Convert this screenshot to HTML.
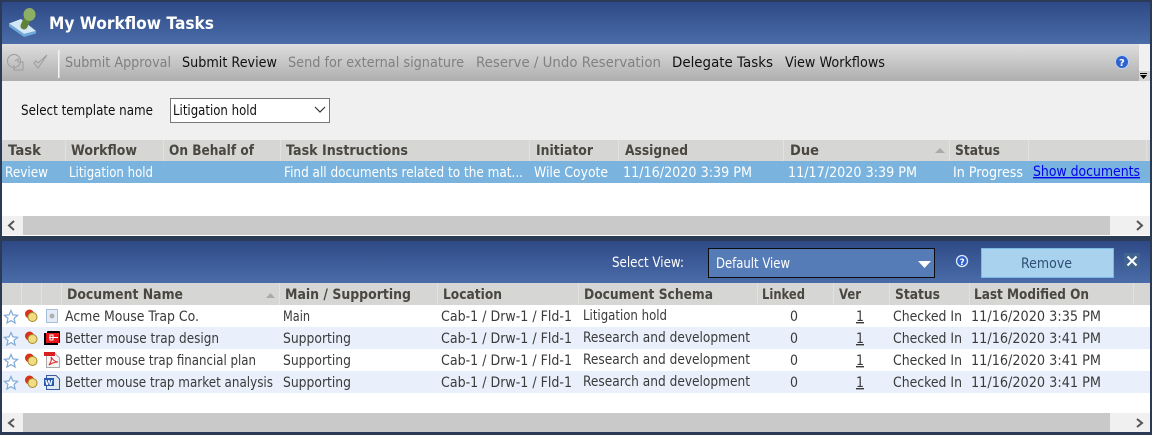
<!DOCTYPE html>
<html><head><meta charset="utf-8">
<style>
html,body{margin:0;padding:0;background:#fff;width:1152px;height:435px;overflow:hidden}
svg{display:block}
text{font-family:"DejaVu Sans","Liberation Sans",sans-serif;font-size:14px;fill:#3a3a3a}
.h{font-weight:bold;fill:#4a4640;font-size:14px}
.w{fill:#fff}
.d{fill:#808080}
.b{fill:#111}
</style></head><body>
<svg width="1152" height="435" viewBox="0 0 1152 435" xmlns="http://www.w3.org/2000/svg">
<defs>
<linearGradient id="hd" x1="0" y1="0" x2="0" y2="1"><stop offset="0" stop-color="#2e4a86"/><stop offset="1" stop-color="#4a6ca9"/></linearGradient>
<linearGradient id="tb" x1="0" y1="0" x2="0" y2="1"><stop offset="0" stop-color="#dedede"/><stop offset="1" stop-color="#aeaeae"/></linearGradient>
<g id="star"><path d="M0 -6.500L1.900 -2.100L6.600 -1.700L3 1.400L4.100 6L0 3.600L-4.100 6L-3 1.400L-6.600 -1.700L-1.900 -2.100Z" fill="#fff" stroke="#7fabd6" stroke-width="1.200"/></g>
<g id="dots"><circle cx="-2.500" cy="-2" r="4.500" fill="#d8321c"/><circle cx="0.500" cy="1" r="4.500" fill="#f1dc83" stroke="#a58a2a" stroke-width="1"/></g>
</defs>
<rect width="1152" height="435" fill="#2b3b55"/>
<rect x="2" y="2" width="1148" height="42" fill="url(#hd)"/>
<rect x="2" y="44" width="1148" height="191" fill="#f0f0f0"/>
<rect x="2" y="44" width="1137" height="37" fill="url(#tb)"/>
<rect x="58" y="50" width="1.500" height="28" fill="#f4f4f4"/>
<path d="M9 23.500L21 19L36 31L24 34Z" fill="#d3e7f6"/>
<path d="M9 23.500L24 34L36 31L36 33.500L24 37L9 26.500Z" fill="#6fa9d8"/>
<path d="M29 15L24 26" fill="none" stroke="#5f8236" stroke-width="7" stroke-linecap="round"/>
<ellipse cx="29.500" cy="14.500" rx="6" ry="6.500" fill="#8daf63"/>
<text class="w" x="49" y="29" font-weight="bold" style="font-size:17px" textLength="165" lengthAdjust="spacingAndGlyphs">My Workflow Tasks</text>
<g fill="none" stroke="#9c9c9c" stroke-width="1"><circle cx="14" cy="61" r="6.500"/><path d="M15 61L18 59V62H23V70H14V65"/><path d="M34 63L38 68L47 55L38 63L36 61Z"/></g>
<text class="d" x="65" y="67" textLength="106" lengthAdjust="spacingAndGlyphs">Submit Approval</text>
<text class="b" x="182" y="67" textLength="95" lengthAdjust="spacingAndGlyphs">Submit Review</text>
<text class="d" x="288" y="67" textLength="176" lengthAdjust="spacingAndGlyphs">Send for external signature</text>
<text class="d" x="476" y="67" textLength="185" lengthAdjust="spacingAndGlyphs">Reserve / Undo Reservation</text>
<text class="b" x="672" y="67" textLength="101" lengthAdjust="spacingAndGlyphs">Delegate Tasks</text>
<text class="b" x="785" y="67" textLength="100" lengthAdjust="spacingAndGlyphs">View Workflows</text>
<circle cx="1122" cy="62" r="6.500" fill="#2f62d0" stroke="#b9d4ee" stroke-width="1"/>
<text class="w" x="1119" y="66" font-weight="bold" style="font-size:10px">?</text>
<rect x="1139" y="71" width="11" height="10" fill="#d4d4d4"/>
<rect x="1140" y="73" width="7" height="1" fill="#000"/><path d="M1140 75H1147L1143.500 79Z" fill="#000"/>
<text class="b" x="21" y="115" textLength="132" lengthAdjust="spacingAndGlyphs">Select template name</text>
<rect x="170.500" y="98.500" width="159" height="24" fill="#fff" stroke="#777"/>
<text class="b" x="173" y="115" textLength="84" lengthAdjust="spacingAndGlyphs">Litigation hold</text>
<path d="M315 107L320 112L325 107" fill="none" stroke="#333" stroke-width="1.200"/>
<rect x="2" y="140" width="1148" height="21" fill="#d6d6d4"/>
<g fill="#e2e2e0"><rect x="65" y="140" width="1" height="21"/><rect x="163" y="140" width="1" height="21"/><rect x="280" y="140" width="1" height="21"/><rect x="529" y="140" width="1" height="21"/><rect x="618" y="140" width="1" height="21"/><rect x="783" y="140" width="1" height="21"/><rect x="949" y="140" width="1" height="21"/><rect x="1028" y="140" width="1" height="21"/><rect x="1146" y="140" width="1" height="21"/></g>
<text class="h" x="8" y="155" textLength="33" lengthAdjust="spacingAndGlyphs">Task</text>
<text class="h" x="71" y="155" textLength="66" lengthAdjust="spacingAndGlyphs">Workflow</text>
<text class="h" x="169" y="155" textLength="85" lengthAdjust="spacingAndGlyphs">On Behalf of</text>
<text class="h" x="286" y="155" textLength="122" lengthAdjust="spacingAndGlyphs">Task Instructions</text>
<text class="h" x="536" y="155" textLength="57" lengthAdjust="spacingAndGlyphs">Initiator</text>
<text class="h" x="625" y="155" textLength="63" lengthAdjust="spacingAndGlyphs">Assigned</text>
<text class="h" x="790" y="155" textLength="29" lengthAdjust="spacingAndGlyphs">Due</text>
<path d="M935 153L940 148L945 153Z" fill="#aaa"/>
<text class="h" x="955" y="155" textLength="45" lengthAdjust="spacingAndGlyphs">Status</text>
<rect x="2" y="161" width="1148" height="22" fill="#7ab4de"/>
<text class="w" x="5" y="177" textLength="43" lengthAdjust="spacingAndGlyphs">Review</text>
<text class="w" x="69" y="177" textLength="84" lengthAdjust="spacingAndGlyphs">Litigation hold</text>
<text class="w" x="284" y="177" textLength="239" lengthAdjust="spacingAndGlyphs">Find all documents related to the mat...</text>
<text class="w" x="534" y="177" textLength="74" lengthAdjust="spacingAndGlyphs">Wile Coyote</text>
<text class="w" x="623" y="177" textLength="129" lengthAdjust="spacingAndGlyphs">11/16/2020 3:39 PM</text>
<text class="w" x="788" y="177" textLength="129" lengthAdjust="spacingAndGlyphs">11/17/2020 3:39 PM</text>
<text class="w" x="953" y="177" textLength="70" lengthAdjust="spacingAndGlyphs">In Progress</text>
<text x="1033" y="176" textLength="107" lengthAdjust="spacingAndGlyphs" style="fill:#0000ee" text-decoration="underline">Show documents</text>
<rect x="2" y="183" width="1148" height="33" fill="#fff"/>
<rect x="2" y="216" width="1148" height="19" fill="#f0f0f0"/>
<rect x="23" y="216" width="1087" height="19" fill="#c9c9c9"/>
<path d="M14 221L9 225.500L14 230" fill="none" stroke="#555" stroke-width="2"/>
<path d="M1137 221L1142 225.500L1137 230" fill="none" stroke="#555" stroke-width="2"/>
<rect x="2" y="235" width="1148" height="1" fill="#fff"/>
<rect x="0" y="236" width="1152" height="4" fill="#2b3b55"/>
<rect x="2" y="241" width="1148" height="42" fill="url(#hd)"/>
<text class="w" x="612" y="267" textLength="72" lengthAdjust="spacingAndGlyphs">Select View:</text>
<rect x="708.500" y="248.500" width="226" height="29" fill="#557cb7" stroke="#0c0c0c" stroke-width="1"/>
<text class="w" x="716" y="268" textLength="74" lengthAdjust="spacingAndGlyphs">Default View</text>
<path d="M918 261H931L924.500 268Z" fill="#fff"/>
<circle cx="962" cy="261" r="5.500" fill="#2f5fc8" stroke="#dbe8f5" stroke-width="1.300"/>
<text class="w" x="959.500" y="265" font-weight="bold" style="font-size:9px">?</text>
<rect x="981.500" y="248.500" width="132" height="29" fill="#a8d2ed" stroke="#7db8e0"/>
<text x="1021" y="268" textLength="51" lengthAdjust="spacingAndGlyphs" style="fill:#2f4f74">Remove</text>
<rect x="1124" y="253" width="16" height="16" fill="#40638f"/>
<path d="M1127.500 256.500L1136.500 265.500M1136.500 256.500L1127.500 265.500" stroke="#fff" stroke-width="2"/>
<rect x="2" y="283" width="1148" height="22" fill="#d6d6d4"/>
<g fill="#e2e2e0"><rect x="21" y="283" width="1" height="22"/><rect x="41" y="283" width="1" height="22"/><rect x="61" y="283" width="1" height="22"/><rect x="279" y="283" width="1" height="22"/><rect x="437" y="283" width="1" height="22"/><rect x="578" y="283" width="1" height="22"/><rect x="757" y="283" width="1" height="22"/><rect x="833" y="283" width="1" height="22"/><rect x="889" y="283" width="1" height="22"/><rect x="969" y="283" width="1" height="22"/><rect x="1133" y="283" width="1" height="22"/></g>
<text class="h" x="67" y="299" textLength="116" lengthAdjust="spacingAndGlyphs">Document Name</text>
<path d="M266 298L270.500 293L275 298Z" fill="#aaa"/>
<text class="h" x="285" y="299" textLength="126" lengthAdjust="spacingAndGlyphs">Main / Supporting</text>
<text class="h" x="443" y="299" textLength="59" lengthAdjust="spacingAndGlyphs">Location</text>
<text class="h" x="584" y="299" textLength="129" lengthAdjust="spacingAndGlyphs">Document Schema</text>
<text class="h" x="762" y="299" textLength="43" lengthAdjust="spacingAndGlyphs">Linked</text>
<text class="h" x="839" y="299" textLength="22" lengthAdjust="spacingAndGlyphs">Ver</text>
<text class="h" x="895" y="299" textLength="45" lengthAdjust="spacingAndGlyphs">Status</text>
<text class="h" x="974" y="299" textLength="115" lengthAdjust="spacingAndGlyphs">Last Modified On</text>
<rect x="2" y="305" width="1148" height="108" fill="#fff"/>
<rect x="2" y="327" width="1148" height="22" fill="#e9f0fb"/>
<rect x="2" y="371" width="1148" height="22" fill="#e9f0fb"/>
<use href="#star" x="11" y="317"/><use href="#star" x="11" y="339"/><use href="#star" x="11" y="361"/><use href="#star" x="11" y="383"/>
<use href="#dots" x="32" y="316"/><use href="#dots" x="32" y="338"/><use href="#dots" x="32" y="360"/><use href="#dots" x="32" y="382"/>
<rect x="46.500" y="309.500" width="11" height="13" fill="#e3ecf7" stroke="#a7bfd8"/><circle cx="52" cy="316" r="2.500" fill="#b0b0b0"/>
<rect x="44" y="333" width="14" height="12" fill="#000"/><rect x="47" y="331" width="13" height="12" rx="1" fill="#000"/><rect x="46" y="333" width="13" height="10" fill="#e8141a"/><path d="M49 337.500H58M50 335H53V340H50Z" fill="none" stroke="#fff" stroke-width="1"/>
<path d="M46.500 353.500H55L59.500 358V367.500H46.500Z" fill="#f4f4f4" stroke="#aaa"/><rect x="44" y="352" width="11" height="4" fill="#d92020"/><path d="M49 365C51 362 52 359 51 357C53 360 55 362 58 362C55 362 52 363 49 365Z" fill="none" stroke="#d92020" stroke-width="1"/>
<path d="M46.500 375.500H56L59.500 379V389.500H46.500Z" fill="#dfe8f5" stroke="#3a5a9a"/><rect x="44" y="378" width="10" height="8" fill="#2a5ab0"/><text class="w" x="45" y="385" font-weight="bold" style="font-size:7px">W</text>
<text x="65" y="321" textLength="134" lengthAdjust="spacingAndGlyphs">Acme Mouse Trap Co.</text>
<text x="65" y="343" textLength="154" lengthAdjust="spacingAndGlyphs">Better mouse trap design</text>
<text x="65" y="365" textLength="191" lengthAdjust="spacingAndGlyphs">Better mouse trap financial plan</text>
<text x="65" y="387" textLength="208" lengthAdjust="spacingAndGlyphs">Better mouse trap market analysis</text>
<text x="283" y="321" textLength="27" lengthAdjust="spacingAndGlyphs">Main</text>
<text x="283" y="343" textLength="68" lengthAdjust="spacingAndGlyphs">Supporting</text>
<text x="283" y="365" textLength="68" lengthAdjust="spacingAndGlyphs">Supporting</text>
<text x="283" y="387" textLength="68" lengthAdjust="spacingAndGlyphs">Supporting</text>
<text x="441" y="321" textLength="131" lengthAdjust="spacingAndGlyphs">Cab-1 / Drw-1 / Fld-1</text>
<text x="441" y="343" textLength="131" lengthAdjust="spacingAndGlyphs">Cab-1 / Drw-1 / Fld-1</text>
<text x="441" y="365" textLength="131" lengthAdjust="spacingAndGlyphs">Cab-1 / Drw-1 / Fld-1</text>
<text x="441" y="387" textLength="131" lengthAdjust="spacingAndGlyphs">Cab-1 / Drw-1 / Fld-1</text>
<text x="583" y="320" textLength="84" lengthAdjust="spacingAndGlyphs">Litigation hold</text>
<text x="583" y="342" textLength="167" lengthAdjust="spacingAndGlyphs">Research and development</text>
<text x="583" y="364" textLength="167" lengthAdjust="spacingAndGlyphs">Research and development</text>
<text x="583" y="386" textLength="167" lengthAdjust="spacingAndGlyphs">Research and development</text>
<text x="790" y="321" textLength="8" lengthAdjust="spacingAndGlyphs">0</text><text x="790" y="343" textLength="8" lengthAdjust="spacingAndGlyphs">0</text><text x="790" y="365" textLength="8" lengthAdjust="spacingAndGlyphs">0</text><text x="790" y="387" textLength="8" lengthAdjust="spacingAndGlyphs">0</text>
<text x="856" y="321" textLength="8" lengthAdjust="spacingAndGlyphs" text-decoration="underline">1</text><text x="856" y="343" textLength="8" lengthAdjust="spacingAndGlyphs" text-decoration="underline">1</text><text x="856" y="365" textLength="8" lengthAdjust="spacingAndGlyphs" text-decoration="underline">1</text><text x="856" y="387" textLength="8" lengthAdjust="spacingAndGlyphs" text-decoration="underline">1</text>
<text x="893" y="321" textLength="69" lengthAdjust="spacingAndGlyphs">Checked In</text>
<text x="893" y="343" textLength="69" lengthAdjust="spacingAndGlyphs">Checked In</text>
<text x="893" y="365" textLength="69" lengthAdjust="spacingAndGlyphs">Checked In</text>
<text x="893" y="387" textLength="69" lengthAdjust="spacingAndGlyphs">Checked In</text>
<text x="971" y="321" textLength="130" lengthAdjust="spacingAndGlyphs">11/16/2020 3:35 PM</text>
<text x="971" y="343" textLength="130" lengthAdjust="spacingAndGlyphs">11/16/2020 3:41 PM</text>
<text x="971" y="365" textLength="130" lengthAdjust="spacingAndGlyphs">11/16/2020 3:41 PM</text>
<text x="971" y="387" textLength="130" lengthAdjust="spacingAndGlyphs">11/16/2020 3:41 PM</text>
<rect x="2" y="413" width="1148" height="19" fill="#f0f0f0"/>
<rect x="23" y="413" width="1087" height="19" fill="#c9c9c9"/>
<path d="M14 419L9 423L14 427" fill="none" stroke="#555" stroke-width="2"/>
<path d="M1137 419L1142 423L1137 427" fill="none" stroke="#555" stroke-width="2"/>
</svg>
</body></html>
